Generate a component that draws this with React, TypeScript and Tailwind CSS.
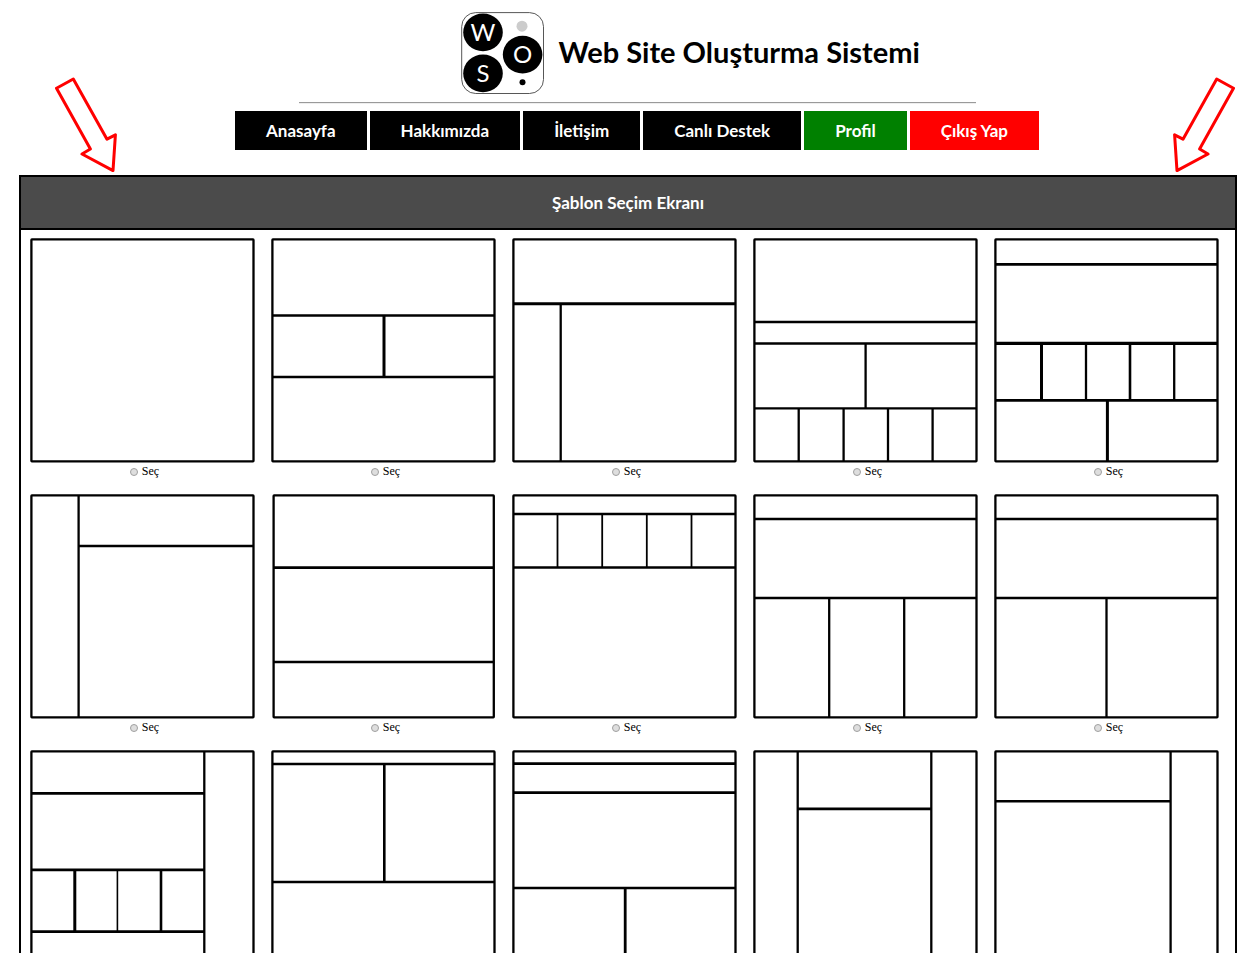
type Line = [x1: number, y1: number, x2: number, y2: number, width?: number];

const L = 1.4;
const R = 223.5;
const B = 223.3;

const TEMPLATES: { lines: Line[]; left?: number; right?: number }[] = [
  { lines: [] },
  {
    lines: [
      [L, 77.5, R, 77.5],
      [113, 77.5, 113, 139, 3],
      [L, 139, R, 139],
    ],
  },
  {
    lines: [
      [L, 65.7, R, 65.7, 3],
      [48.7, 65.7, 48.7, B],
    ],
  },
  {
    lines: [
      [L, 84, R, 84, 2.6],
      [L, 105.5, R, 105.5, 2.6],
      [112.6, 105, 112.6, 170],
      [L, 170.3, R, 170.3],
      [45.7, 170, 45.7, B],
      [90.6, 170, 90.6, B],
      [135, 170, 135, B],
      [179.6, 170, 179.6, B],
    ],
  },
  {
    lines: [
      [L, 26.4, R, 26.4, 2.6],
      [L, 105.4, R, 105.4, 3.2],
      [47.5, 105, 47.5, 162, 3],
      [92, 105, 92, 162],
      [136, 105, 136, 162, 2.6],
      [180.2, 105, 180.2, 162],
      [L, 162.4, R, 162.4, 2.6],
      [113.4, 162, 113.4, B, 3],
    ],
  },
  {
    lines: [
      [48.6, L, 48.6, B],
      [48.6, 52, R, 52, 2.6],
    ],
  },
  {
    left: 2.6,
    right: 222.8,
    lines: [
      [2.6, 73.6, 222.8, 73.6, 2.6],
      [2.6, 168, 222.8, 168, 2.6],
    ],
  },
  {
    lines: [
      [L, 20, R, 20, 2.6],
      [L, 73.5, R, 73.5, 2.6],
      [45.5, 20, 45.5, 73, 1.8],
      [90.2, 20, 90.2, 73, 1.8],
      [134.8, 20, 134.8, 73, 1.8],
      [179.5, 20, 179.5, 73, 1.8],
    ],
  },
  {
    lines: [
      [L, 25, R, 25, 2.6],
      [L, 104, R, 104, 2.6],
      [76.2, 104, 76.2, B],
      [151.2, 104, 151.2, B],
    ],
  },
  {
    lines: [
      [L, 25, R, 25, 2.6],
      [L, 104, R, 104, 2.6],
      [112.5, 104, 112.5, B],
    ],
  },
  {
    lines: [
      [174.3, L, 174.3, B],
      [L, 43.4, 174.3, 43.4, 2.6],
      [L, 119.8, 174.3, 119.8, 2.8],
      [44.8, 120, 44.8, 181, 3],
      [87.4, 120, 87.4, 181, 1.6],
      [131, 120, 131, 181, 2.6],
      [L, 181.6, 174.3, 181.6, 2.6],
    ],
  },
  {
    lines: [
      [L, 14, R, 14, 2.6],
      [113.3, 14, 113.3, 132, 2.6],
      [L, 132, R, 132, 2.6],
    ],
  },
  {
    lines: [
      [L, 13.6, R, 13.6, 2.6],
      [L, 42.6, R, 42.6, 2.6],
      [L, 138, R, 138, 2.6],
      [113.2, 138, 113.2, B, 2.8],
    ],
  },
  {
    lines: [
      [44.7, L, 44.7, B],
      [178.3, L, 178.3, B],
      [44.7, 58.9, 178.3, 58.9, 2.6],
    ],
  },
  {
    lines: [
      [176.6, L, 176.6, B],
      [L, 51.2, 176.6, 51.2, 2.6],
    ],
  },
];

const NAV = [
  { label: "Anasayfa", color: "bg-black" },
  { label: "Hakkımızda", color: "bg-black" },
  { label: "İletişim", color: "bg-black" },
  { label: "Canlı Destek", color: "bg-black" },
  { label: "Profil", color: "bg-[#008000]" },
  { label: "Çıkış Yap", color: "bg-[#ff0000]" },
];

function Logo() {
  return (
    <svg
      className="h-[83px] w-[84px] shrink-0 font-[Lato,sans-serif]"
      viewBox="0 0 84 83"
      role="img"
      aria-label="WOS"
    >
      <rect x="0.7" y="0.6" width="81.8" height="80.9" rx="14" fill="#fff" stroke="#444" strokeWidth="0.9" />
      <ellipse cx="22" cy="20.4" rx="19.8" ry="18.8" />
      <ellipse cx="22" cy="61.4" rx="19.8" ry="18.8" />
      <ellipse cx="61.6" cy="42.6" rx="19.8" ry="18.8" />
      <circle cx="61" cy="14.2" r="5.5" fill="#ccc" />
      <circle cx="61.5" cy="70.2" r="3" />
      <g fill="#fff" fontSize="24" textAnchor="middle">
        <text x="22" y="28.6">W</text>
        <text x="22" y="69.7">S</text>
        <text x="61.6" y="50.6">O</text>
      </g>
    </svg>
  );
}

function Arrow({ className }: { className: string }) {
  return (
    <svg className={className} viewBox="0 0 62 96" aria-hidden="true">
      <path
        d="M18.3 2 52 62.2 60.4 57.8 58 93.6 27 77 35.4 72 1.5 11.2Z"
        fill="none"
        stroke="#f00"
        strokeWidth="3"
        strokeLinejoin="round"
      />
    </svg>
  );
}

function Thumbnail({ lines, left = L, right = R }: { lines: Line[]; left?: number; right?: number }) {
  return (
    <svg className="block size-[225px]" viewBox="0 0 225 225" stroke="#000" strokeWidth="2.3" aria-hidden="true">
      <rect x={left} y={L} width={right - left} height={B - L} rx="0.5" fill="none" />
      {lines.map(([x1, y1, x2, y2, width], i) => (
        <line key={i} x1={x1} y1={y1} x2={x2} y2={y2} strokeWidth={width} />
      ))}
    </svg>
  );
}

export default function App() {
  return (
    <div className="bg-white px-5 pb-5 text-black">
      <header className="flex items-end justify-between pr-0.5 pb-0.5 pl-[35px]">
        <Arrow className="h-24 w-[62px] shrink-0" />
        <div className="flex flex-col items-center pt-3 pr-4 pb-[23px]">
          <div className="w-full max-w-[677px] border-b border-[#9a9a9a] pb-[7px] pl-[162px] shadow-[0_1px_0_#eee]">
            <div className="flex items-center gap-3.5">
              <Logo />
              <h1 className="pb-1 font-[Lato,sans-serif] text-[29px] leading-9 font-bold whitespace-nowrap">
                Web Site Oluşturma Sistemi
              </h1>
            </div>
          </div>
          <nav className="mt-2 flex gap-[3px]">
            {NAV.map(({ label, color }) => (
              <a
                key={label}
                href="#"
                className={`${color} px-[31px] font-[Lato,sans-serif] text-[17px] leading-[39px] font-bold whitespace-nowrap text-white`}
              >
                {label}
              </a>
            ))}
          </nav>
        </div>
        <Arrow className="h-24 w-[62px] shrink-0 -scale-x-100" />
      </header>

      <main className="-ml-px border-2 border-black">
        <h2 className="border-b-2 border-black bg-[#4b4b4b] text-center font-[Lato,sans-serif] text-[17px] leading-[51px] font-bold text-white">
          Şablon Seçim Ekranı
        </h2>
        <div className="flex flex-wrap gap-x-4 gap-y-3.5 py-2 pl-[9px]">
          {TEMPLATES.map((template, i) => (
            <label key={i} className="flex flex-col">
              <Thumbnail {...template} />
              <span className="flex items-center justify-center gap-1 pl-1 font-['Liberation_Serif',serif] text-xs leading-[17px]">
                <input
                  type="radio"
                  name="template"
                  value={i + 1}
                  className="size-2 appearance-none rounded-full border border-[#a0a0a0] bg-[#dedede] checked:bg-[#444]"
                />
                Seç
              </span>
            </label>
          ))}
        </div>
      </main>
    </div>
  );
}
